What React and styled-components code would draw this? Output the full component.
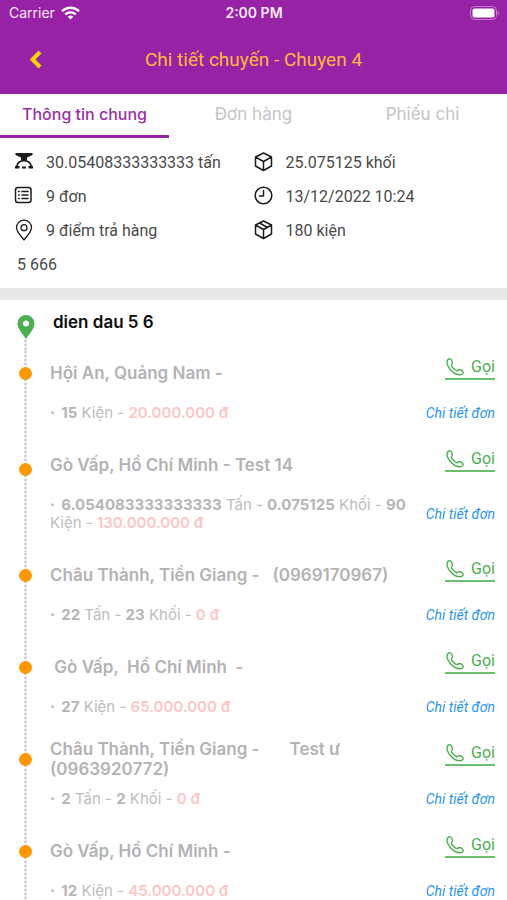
import React from "react";
import styled, { createGlobalStyle } from "styled-components";

const Global = createGlobalStyle`
  * { box-sizing: border-box; }
  body { margin: 0; background: #fff; }
  button { border: 0; background: none; padding: 0; margin: 0; font: inherit; color: inherit; cursor: pointer; }
  ul, h1, h2, h3, p { margin: 0; padding: 0; font: inherit; }
  svg { display: block; flex: none; }
`;

const sans = `Inter, "Noto Sans", sans-serif`;
const narrow = `Roboto, "Noto Sans", sans-serif`;

const Screen = styled.div`
  height: 100vh;
  display: flex;
  flex-direction: column;
  background: #fff;
  font-family: ${sans};
`;

const Header = styled.header`
  flex: none;
  background: #9822a6;
`;

const StatusBar = styled.div`
  display: grid;
  grid-template-columns: 1fr auto 1fr;
  align-items: center;
  height: 26px;
  padding: 0 8px 0 9px;
  color: #fbe9fc;
  font-size: 14px;
  line-height: 18px;
`;

const Carrier = styled.span`
  display: flex;
  align-items: center;
  gap: 6px;
`;

const Clock = styled.time`
  font-weight: 600;
`;

const BatteryBox = styled.span`
  justify-self: end;
`;

const TitleBar = styled.div`
  display: grid;
  grid-template-columns: 48px 1fr 48px;
  align-items: center;
  height: 68px;
  padding: 0 12px;
`;

const BackButton = styled.button`
  display: flex;
  align-items: center;
  justify-content: center;
  height: 48px;
  color: #ffd600;
`;

const Title = styled.h1`
  text-align: center;
  font-family: ${narrow};
  font-size: 19px;
  line-height: 24px;
  color: #ffb93c;
`;

const Tabs = styled.nav`
  flex: none;
  display: grid;
  grid-template-columns: repeat(3, 1fr);
`;

const Tab = styled.button`
  height: 44px;
  padding-bottom: 1px;
  border-bottom: 3px solid ${(p) => (p.$active ? "#9822a6" : "transparent")};
  color: ${(p) => (p.$active ? "#9a30a8" : "#c4c4c4")};
  font-size: ${(p) => (p.$active ? "16px" : "17px")};
  line-height: 20px;
  font-weight: ${(p) => (p.$active ? 500 : 400)};
`;

const Summary = styled.section`
  flex: none;
  padding: 7px 14px 5px;
  border-bottom: 12px solid #e9e8e9;
  font-family: ${narrow};
  font-size: 16px;
  color: #4a4a4a;
`;

const Facts = styled.ul`
  display: grid;
  grid-template-columns: 1fr 1fr;
  list-style: none;
`;

const Fact = styled.li`
  display: flex;
  align-items: center;
  gap: 12px;
  height: 34px;
  white-space: nowrap;
  color: #4a4a4a;
  svg { color: #1c1c1c; }
`;

const Note = styled.p`
  padding: 0 3px;
  line-height: 36px;
`;

const Route = styled.main`
  flex: 1;
  min-height: 0;
  overflow-y: auto;
  scrollbar-width: none;
`;

const Start = styled.div`
  display: flex;
  height: 50px;
`;

const Rail = styled.div`
  flex: none;
  width: 51px;
  margin-right: -1px;
  display: flex;
  flex-direction: column;
  align-items: center;
  padding-top: ${(p) => (p.$start ? "15px" : 0)};
`;

const Dots = styled.div`
  flex: ${(p) => p.$grow} 1 0;
  width: 3px;
  background: radial-gradient(circle, #d2d2d2 1px, transparent 2px) 0 0 / 3px 4px;
`;

const Dot = styled.span`
  flex: none;
  width: 13px;
  height: 13px;
  margin: -6px 0;
  z-index: 1;
  border-radius: 50%;
  background: #ff9800;
`;

const StartName = styled.h2`
  padding: 12px 3px;
  font-size: 17px;
  line-height: 20px;
  font-weight: 600;
  color: #0c0c0c;
`;

const Stops = styled.ul`
  list-style: none;
`;

const Stop = styled.li`
  display: flex;
`;

const StopBody = styled.div`
  flex: 1;
  min-width: 0;
  padding: 0 12px 20px 0;
`;

const StopHead = styled.div`
  display: flex;
  align-items: center;
  justify-content: space-between;
  height: 46px;
  margin-bottom: 8px;
`;

const StopName = styled.h3`
  font-size: 17px;
  line-height: 20px;
  font-weight: 600;
  color: #b3b3b3;
  white-space: pre-wrap;
`;

const Call = styled.button`
  flex: none;
  align-self: flex-start;
  display: flex;
  align-items: center;
  justify-content: space-between;
  width: 50px;
  height: 24px;
  margin-top: 6px;
  border-bottom: 2px solid #6abf6d;
  font-family: ${narrow};
  font-size: 16px;
  line-height: 20px;
  color: #4caf50;
`;

const StopFoot = styled.div`
  display: flex;
  align-items: center;
  justify-content: space-between;
`;

const Load = styled.p`
  flex: 1;
  font-size: 15px;
  line-height: 18px;
  color: #bdbdbd;
  b { font-weight: 700; color: #b6b6b6; }
`;

const Bullet = styled.b`
  margin-right: 2px;
`;

const Price = styled.span`
  font-weight: 600;
  color: #fcc6c6;
`;

const Detail = styled.a`
  flex: none;
  font-family: ${narrow};
  font-size: 14px;
  line-height: 18px;
  font-style: italic;
  text-decoration: none;
  color: #2b96ee;
`;

const line = { fill: "none", stroke: "currentColor", strokeWidth: 1.5, strokeLinecap: "round", strokeLinejoin: "round" };

const Wifi = () => (
  <svg width="19" height="14" viewBox="0 0 19 14" fill="none" stroke="#fff" strokeWidth="2.4" aria-hidden="true">
    <path d="M1 5.2a12.2 12.2 0 0 1 17 0" />
    <path d="M4.2 8.5a7.6 7.6 0 0 1 10.6 0" />
    <path d="M9.5 13.6 6.7 10.8a4 4 0 0 1 5.6 0z" fill="#fff" stroke="none" />
  </svg>
);

const Battery = () => (
  <svg width="29" height="14" viewBox="0 0 29 14" aria-hidden="true">
    <rect x="0.5" y="0.5" width="26" height="13" rx="4" fill="none" stroke="#c07cc9" />
    <rect x="2.5" y="2.5" width="22" height="9" rx="2" fill="#fff" />
    <path d="M27.5 5v4q1.5-.6 1.5-2t-1.5-2z" fill="#c07cc9" />
  </svg>
);

const Back = () => (
  <svg width="20" height="20" viewBox="0 0 20 20" aria-hidden="true">
    <path d="M14 2 6.500 9.500l7.500 7.500" fill="none" stroke="currentColor" strokeWidth="4" strokeLinejoin="miter" />
  </svg>
);

const Scale = () => (
  <svg width="20" height="20" viewBox="0 0 20 20" aria-hidden="true">
    <path d="M1.500 1h17v2L13 5.500v3H7v-3L1.500 3z" fill="currentColor" />
    <path d="M2.700 14.500C3.500 10.500 6 8.700 10 8.700s6.500 1.800 7.300 5.800" fill="none" stroke="currentColor" strokeWidth="1.800" />
    <path d="M1 14h4.500v2.500H1zM14.500 14H19v2.500h-4.500zM8 14.500h4v2H8z" fill="currentColor" />
  </svg>
);

const Order = () => (
  <svg width="20" height="20" viewBox="0 0 20 20" {...line} aria-hidden="true">
    <rect x="1.500" y="1.500" width="15.500" height="15" rx="2.500" />
    <path d="M8 5.500h6M8 9h6M8 12.500h6M4.700 5.500h.5M4.700 9h.5M4.700 12.500h.5" />
  </svg>
);

const Place = () => (
  <svg width="20" height="22" viewBox="0 0 20 22" {...line} strokeWidth="1.300" aria-hidden="true">
    <path d="M10 21c-2-3.200-7.500-7.800-7.500-12.300a7.500 7.500 0 0 1 15 0C17.500 13.200 12 17.800 10 21z" />
    <circle cx="10" cy="8.700" r="3" />
  </svg>
);

const Cube = ({ taped }) => (
  <svg width="20" height="20" viewBox="0 0 20 20" {...line} aria-hidden="true">
    <path d="M9.500 1 17.500 5v9l-8 4.500-8-4.500V5zM1.500 5l8 4.500 8-4.500M9.500 9.500v9" />
    {taped && <path d="M5.500 3l8 4.500" />}
  </svg>
);

const Time = () => (
  <svg width="20" height="20" viewBox="0 0 20 20" {...line} aria-hidden="true">
    <circle cx="9.500" cy="9.500" r="8.300" />
    <path d="M9.500 4.500v5.500h-4" />
  </svg>
);

const Phone = () => (
  <svg width="20" height="20" viewBox="0 0 20 20" {...line} strokeWidth="1.400" aria-hidden="true">
    <path d="M5.300 1.800C4 1.300 2 2.700 2 5c0 5.500 7 12.800 12.700 12.800 2 0 3.600-1.300 3.500-2.600-.1-1.400-2.600-2.700-3.900-2.700-1.200 0-1.400 1.300-2.500 1.200C10 13.400 6.800 10.200 6.400 8.400c-.2-1.100.9-1.400 1-2.600C7.500 4.500 6.500 2.200 5.300 1.800z" />
  </svg>
);

const Pin = () => (
  <svg width="18" height="24" viewBox="0 0 18 24" aria-hidden="true">
    <path d="M9 0a8.500 8.500 0 0 0-8.500 8.500C.5 14 5.500 18.500 9 24c3.500-5.500 8.500-10 8.500-15.500A8.500 8.500 0 0 0 9 0z" fill="#4caf50" />
    <circle cx="9" cy="8.500" r="3" fill="#fff" />
  </svg>
);

const facts = [
  { icon: <Scale />, text: "30.05408333333333 tấn" },
  { icon: <Cube />, text: "25.075125 khối" },
  { icon: <Order />, text: "9 đơn" },
  { icon: <Time />, text: "13/12/2022 10:24" },
  { icon: <Place />, text: "9 điểm trả hàng" },
  { icon: <Cube taped />, text: "180 kiện" },
];

const stops = [
  { name: "Hội An, Quảng Nam -", load: [["15", "Kiện"]], price: "20.000.000 đ" },
  {
    name: "Gò Vấp, Hồ Chí Minh - Test 14",
    load: [["6.054083333333333", "Tấn"], ["0.075125", "Khối"], ["90", "Kiện"]],
    price: "130.000.000 đ",
  },
  { name: "Châu Thành, Tiền Giang -   (0969170967)", load: [["22", "Tấn"], ["23", "Khối"]], price: "0 đ" },
  { name: " Gò Vấp,  Hồ Chí Minh  -", load: [["27", "Kiện"]], price: "65.000.000 đ" },
  { name: "Châu Thành, Tiền Giang -       Test ư (0963920772)", load: [["2", "Tấn"], ["2", "Khối"]], price: "0 đ" },
  { name: "Gò Vấp, Hồ Chí Minh -", load: [["12", "Kiện"]], price: "45.000.000 đ" },
];

export default function App() {
  return (
    <Screen>
      <Global />
      <Header>
        <StatusBar>
          <Carrier>Carrier <Wifi /></Carrier>
          <Clock>2:00 PM</Clock>
          <BatteryBox><Battery /></BatteryBox>
        </StatusBar>
        <TitleBar>
          <BackButton aria-label="Quay lại"><Back /></BackButton>
          <Title>Chi tiết chuyến - Chuyen 4</Title>
        </TitleBar>
      </Header>
      <Tabs>
        <Tab $active>Thông tin chung</Tab>
        <Tab>Đơn hàng</Tab>
        <Tab>Phiếu chi</Tab>
      </Tabs>
      <Summary>
        <Facts>
          {facts.map(({ icon, text }) => (
            <Fact key={text}>{icon}{text}</Fact>
          ))}
        </Facts>
        <Note>5 666</Note>
      </Summary>
      <Route>
        <Start>
          <Rail $start><Pin /><Dots $grow={1} /></Rail>
          <StartName>dien dau 5 6</StartName>
        </Start>
        <Stops>
          {stops.map((stop) => (
            <Stop key={stop.name}>
              <Rail><Dots $grow={1} /><Dot /><Dots $grow={3} /></Rail>
              <StopBody>
                <StopHead>
                  <StopName>{stop.name}</StopName>
                  <Call><Phone />Gọi</Call>
                </StopHead>
                <StopFoot>
                  <Load>
                    <Bullet>·</Bullet>{" "}
                    {stop.load.map(([amount, unit]) => (
                      <React.Fragment key={unit}><b>{amount}</b> {unit} - </React.Fragment>
                    ))}
                    <Price>{stop.price}</Price>
                  </Load>
                  <Detail href="#order">Chi tiết đơn</Detail>
                </StopFoot>
              </StopBody>
            </Stop>
          ))}
        </Stops>
      </Route>
    </Screen>
  );
}
